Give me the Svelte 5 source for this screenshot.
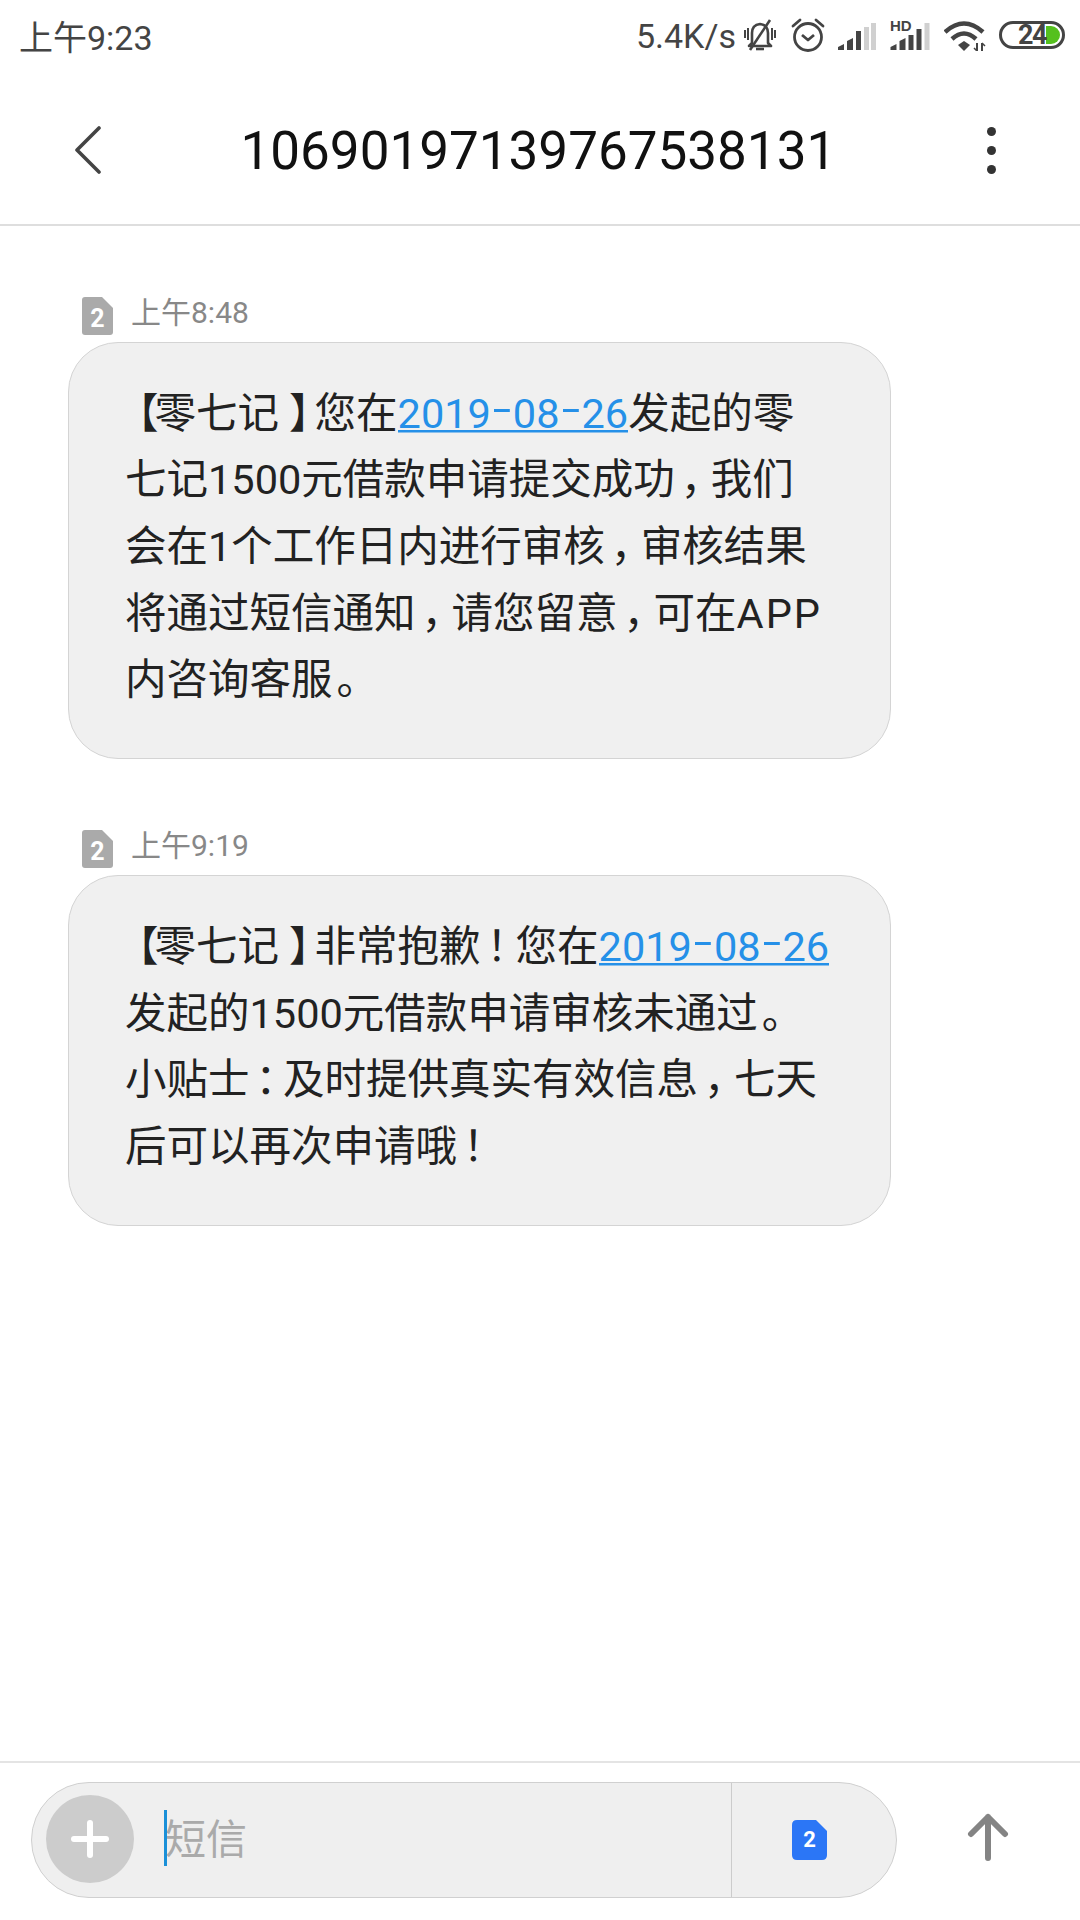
<script>
  const kinds = { '【': 'open', '】': 'close', '，': 'comma', '！': 'bang', '：': 'colon', '。': 'stop', 'APP': 'latin' };
  const messages = [
    { time: '上午8:48', lines: [
      ['【零七记】您在', '@2019-08-26', '发起的零'],
      ['七记1500元借款申请提交成功，我们'],
      ['会在1个工作日内进行审核，审核结果'],
      ['将通过短信通知，请您留意，可在APP'],
      ['内咨询客服。']
    ]},
    { time: '上午9:19', lines: [
      ['【零七记】非常抱歉！您在', '@2019-08-26'],
      ['发起的1500元借款申请审核未通过。'],
      ['小贴士：及时提供真实有效信息，七天'],
      ['后可以再次申请哦！']
    ]}
  ];
  const split = (s) => s.split(/([【】，！：。]|APP)/).filter(Boolean);
  const dateParts = (s) => s.slice(1).split(/(-)/);
</script>

<div class="page">
  <div class="status">
    <span class="clock">上午9:23</span>
    <div class="indicators">
      <span class="speed">5.4K/s</span>
      <svg class="bell" width="34" height="34" viewBox="0 0 34 34" fill="none" stroke="#444">
        <path d="M9 25 V15 Q9 7 17 6 Q25 7 25 15 V25 L28 28 H6 Z" stroke-width="2.6" stroke-linejoin="round"/>
        <path d="M13 31 H21" stroke-width="2.6"/>
        <path d="M27 2 L7 32" stroke-width="2.6"/>
        <path d="M2 12 V20 M5 10 V22 M29 10 V22 M32 12 V20" stroke-width="2"/>
      </svg>
      <svg class="alarm" width="34" height="34" viewBox="0 0 34 34" fill="none" stroke="#444" stroke-width="2.8">
        <circle cx="17" cy="19" r="13.5"/>
        <path d="M11 17 L17 22 L23 17" stroke-linejoin="round"/>
        <path d="M2 8 L9 2 M32 8 L25 2" stroke-linecap="round"/>
      </svg>
      <svg class="signal" width="39" height="27" viewBox="0 0 39 27">
        <path d="M0 27 V24 L6 21 V27 Z M9 27 V18 L15 15 V27 Z" fill="#444"/>
        <rect x="18" y="8" width="5" height="19" fill="#444"/>
        <rect x="26" y="4" width="5" height="23" fill="#d0d0d0"/>
        <rect x="33" y="0" width="5" height="27" fill="#d0d0d0"/>
      </svg>
      <div class="hd">
        <span>HD</span>
        <svg width="40" height="27" viewBox="0 0 39 27">
          <path d="M0 27 V24 L6 21 V27 Z M9 27 V18 L15 15 V27 Z" fill="#444"/>
          <rect x="18" y="12" width="5" height="15" fill="#444"/>
          <rect x="26" y="6" width="5" height="21" fill="#444"/>
          <rect x="34" y="0" width="5" height="27" fill="#d0d0d0"/>
        </svg>
      </div>
      <svg class="wifi" width="42" height="30" viewBox="0 0 42 30" fill="none" stroke="#444" stroke-width="4.500">
        <path d="M1 11 Q20 -6 39 11"/>
        <path d="M8 18 Q20 7 32 18"/>
        <path d="M14 24 L20 20 L26 24 L20 30 Z" fill="#444" stroke="none"/>
        <path d="M33 22 V30 M38 22 V30" stroke-width="2"/>
        <path d="M30 27 L33 30 M38 22 L41 25" stroke-width="1.500"/>
      </svg>
      <div class="battery">
        <span class="level"></span>
        <span class="pct">24</span>
      </div>
    </div>
  </div>

  <header class="bar">
    <svg class="back" width="26" height="48" viewBox="0 0 26 48" fill="none" stroke="#444" stroke-width="3.6" stroke-linecap="round" stroke-linejoin="round">
      <path d="M24 2 L2 24 L24 46"/>
    </svg>
    <h1>10690197139767538131</h1>
    <div class="more"><i></i><i></i><i></i></div>
  </header>

  <main class="thread">
    {#each messages as m}
      <section class="msg">
        <div class="meta">
          <svg width="31" height="38" viewBox="0 0 31 38">
            <path d="M3 0 H20 L31 11 V35 Q31 38 28 38 H3 Q0 38 0 35 V3 Q0 0 3 0 Z" fill="#aaa"/>
            <text x="15.500" y="30" text-anchor="middle" class="simnum">2</text>
          </svg>
          <span>{m.time}</span>
        </div>
        <div class="bubble">
          {#each m.lines as line}
            <div class="line">{#each line as part}{#if part[0] === '@'}<a href="#x">{#each dateParts(part) as d}{#if d === '-'}<span class="hy">-</span>{:else}{d}{/if}{/each}</a>{:else}{#each split(part) as s}{#if kinds[s]}<span class={kinds[s]}>{s}</span>{:else}{s}{/if}{/each}{/if}{/each}</div>
          {/each}
        </div>
      </section>
    {/each}
  </main>

  <footer class="compose">
    <div class="field">
      <div class="plus"><i></i><i></i></div>
      <div class="input"><span class="caret"></span><span class="ph">短信</span></div>
      <div class="sim">
        <svg width="35" height="40" viewBox="0 0 35 40">
          <path d="M5 0 H24 L35 11 V35 Q35 40 30 40 H5 Q0 40 0 35 V5 Q0 0 5 0 Z" fill="#2b76f6"/>
          <text x="17.500" y="27" text-anchor="middle" class="simnum2">2</text>
        </svg>
      </div>
    </div>
    <svg class="send" width="42" height="48" viewBox="0 0 42 48" fill="none" stroke="#848484" stroke-width="6" stroke-linecap="round" stroke-linejoin="round">
      <path d="M21 45 V4 M4 21 L21 4 L38 21"/>
    </svg>
  </footer>
</div>

<style>
  :global(body) { margin: 0; background: #fff; }
  .page {
    width: 1080px; height: 1920px; display: flex; flex-direction: column;
    font-family: Roboto, "Noto Sans CJK SC", sans-serif; background: #fff; overflow: hidden;
  }
  .status { height: 70px; display: flex; justify-content: space-between; align-items: center; padding: 0 15px 0 19px; flex: none; color: #444; }
  .clock { font-size: 34px; }
  .indicators { display: flex; align-items: center; }
  .speed { font-size: 34px; margin-right: 7px; margin-top: 2px; }
  .alarm { margin-left: 14px; }
  .signal { margin-left: 13px; margin-top: 2px; }
  .hd { position: relative; margin-left: 13px; margin-top: 2px; height: 27px; }
  .hd span { position: absolute; left: 0; top: -4px; font: 700 15px/14px "Liberation Sans", sans-serif; color: #444; }
  .wifi { margin-left: 14px; margin-top: 2px; }
  .battery {
    position: relative; margin-left: 13px; width: 66px; height: 28px; box-sizing: border-box;
    border: 3px solid #444; border-radius: 14px;
  }
  .level { position: absolute; right: 2px; top: 2px; bottom: 2px; width: 14px; background: #55c01e; border-radius: 0 12px 12px 0; }
  .pct { position: absolute; left: 16px; top: -2px; font: 700 27px/26px Roboto, sans-serif; letter-spacing: -1.500px; color: #444; }

  .bar {
    height: 156px; box-sizing: border-box; flex: none; border-bottom: 2px solid #dedede;
    display: flex; align-items: center; padding: 8px 0 0 75px;
  }
  .back { flex: none; margin-top: -2px; }
  h1 { margin: 0 0 0 139.500px; font-size: 53px; font-weight: 400; color: #111; line-height: 1; width: 600px; white-space: nowrap; }
  .more { display: flex; flex-direction: column; gap: 10px; margin-left: 146.500px; margin-top: -2px; }
  .more i { width: 9px; height: 9px; border-radius: 50%; background: #333; }

  .thread { flex: 1; padding: 71px 0 0 68px; }
  .msg { margin-bottom: 71px; }
  .meta { display: flex; align-items: flex-start; height: 45px; padding-left: 14px; color: #888; font-size: 30px; gap: 18px; }
  .meta span { line-height: 30px; margin-top: 1px; }
  .simnum { font: 700 25px Roboto, sans-serif; fill: #fff; }
  .simnum2 { font: 700 22px Roboto, sans-serif; fill: #fff; }
  .bubble {
    width: 823px; box-sizing: border-box; background: #f0f0f0; border: 1.500px solid #d4d4d4; border-radius: 50px;
    padding: 37.500px 0 44.500px 56px; color: #222; font-size: 41.500px; line-height: 66.700px;
  }
  .line { white-space: nowrap; height: 66.700px; }
  .open { margin: 0 -4px 0 -8px; }
  .close { margin: 0 -16px 0 10px; }
  .comma { margin: 0 -11.500px 0 6px; }
  .bang { margin: 0 -12.500px 0 6px; }
  .colon { margin: 0 -14px 0 6px; }
  .stop { margin-left: 4px; }
  .latin { letter-spacing: 2px; }
  a {
    color: #2590e8; text-decoration: none;
    background: linear-gradient(#2590e8, #2590e8) no-repeat 0 41px / 100% 2.500px;
  }
  .hy { display: inline-block; width: 22px; text-align: center; transform: translateY(-5px) scaleX(1.600); }

  .compose { height: 159px; box-sizing: border-box; border-top: 2px solid #e4e4e4; flex: none; position: relative; padding: 19px 0 0 31px; display: flex; }
  .field {
    width: 866px; height: 116px; box-sizing: border-box; background: #efefef; border: 1.500px solid #d0d0d0; border-radius: 58px;
    display: flex; align-items: center;
  }
  .plus { position: relative; width: 88px; height: 88px; border-radius: 50%; background: #ccc; margin: -2px 0 0 14px; flex: none; }
  .plus i { position: absolute; background: #fff; border-radius: 3px; }
  .plus i:first-child { left: 25px; top: 41px; width: 38px; height: 6px; }
  .plus i:last-child { left: 41px; top: 25px; width: 6px; height: 38px; }
  .input { flex: 1; display: flex; align-items: center; position: relative; padding-left: 31px; height: 100%; }
  .caret { position: absolute; left: 30px; top: 27px; width: 3px; height: 56px; background: #1a90d8; }
  .ph { font-size: 41px; color: #aaa; margin-top: -8px; }
  .sim { width: 165px; height: 100%; border-left: 1.500px solid #ccc; flex: none; display: flex; align-items: center; padding-left: 60px; box-sizing: border-box; }
  .send { position: absolute; left: 967px; top: 50px; }
</style>
